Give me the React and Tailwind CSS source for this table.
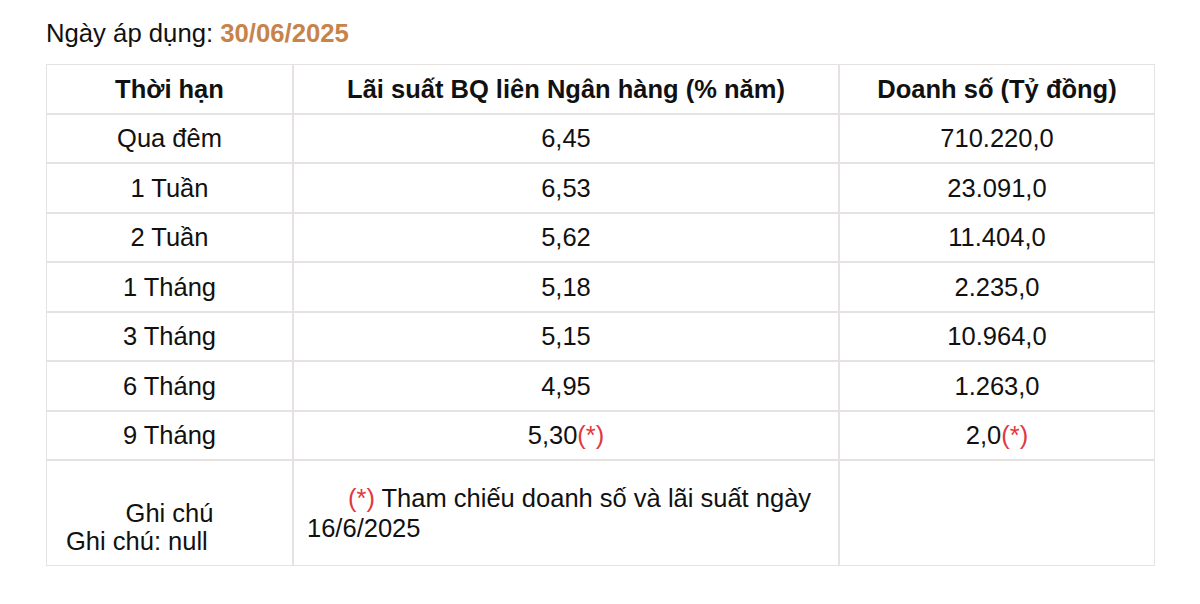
import React from 'react'

const rows = [
  ['Qua đêm', '6,45', '710.220,0'],
  ['1 Tuần', '6,53', '23.091,0'],
  ['2 Tuần', '5,62', '11.404,0'],
  ['1 Tháng', '5,18', '2.235,0'],
  ['3 Tháng', '5,15', '10.964,0'],
  ['6 Tháng', '4,95', '1.263,0'],
  ['9 Tháng', '5,30', '2,0', true],
]

const Star = () => <span className="text-[#e0393e]">(*)</span>

export default function App() {
  return (
    <div className="w-[1200px] h-[604px] bg-white text-[#111] font-['Liberation_Sans',Arial,sans-serif]">
      <div className="pl-[46px] pt-[18px] h-[64px] text-[25.7px] leading-[30px]">
        Ngày áp dụng: <span className="font-bold text-[#c8834a]">30/06/2025</span>
      </div>
      <div className="ml-[46px] w-[1109px] grid grid-cols-[245px_544px_314px] gap-[2px] p-px bg-[#e6e2e2] text-[25.5px] text-center">
        <div className="bg-white h-[47.5px] flex items-center justify-center font-bold">Thời hạn</div>
        <div className="bg-white h-[47.5px] flex items-center justify-center font-bold">Lãi suất BQ liên Ngân hàng (% năm)</div>
        <div className="bg-white h-[47.5px] flex items-center justify-center font-bold">Doanh số (Tỷ đồng)</div>
        {rows.map(([term, rate, amount, note]) => (
          <React.Fragment key={term}>
            <div className="bg-white h-[47.5px] flex items-center justify-center">{term}</div>
            <div className="bg-white h-[47.5px] flex items-center justify-center">
              <span>{rate}{note && <Star />}</span>
            </div>
            <div className="bg-white h-[47.5px] flex items-center justify-center">
              <span>{amount}{note && <Star />}</span>
            </div>
          </React.Fragment>
        ))}
        <div className="bg-white h-[104px] flex flex-col justify-center leading-[28px] px-[19px]">
          <div className="h-[28px]" />
          <div className="text-center">Ghi chú</div>
          <div className="text-left">Ghi chú: null</div>
        </div>
        <div className="bg-white h-[104px] flex items-center pl-[13px] pr-[13px] text-left leading-[30px]">
          <p className="indent-[41px]">
            <Star /> Tham chiếu doanh số và lãi suất ngày 16/6/2025
          </p>
        </div>
        <div className="bg-white h-[104px]" />
      </div>
    </div>
  )
}
